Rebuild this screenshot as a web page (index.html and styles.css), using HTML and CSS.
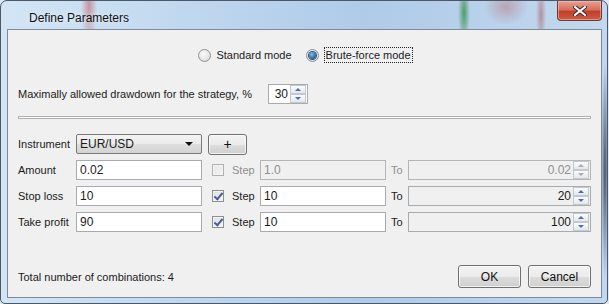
FILE: index.html
```html
<!DOCTYPE html>
<html lang="en">

<head>
    <meta charset="UTF-8">
    <title>Define Parameters</title>
    <link rel="stylesheet" href="styles.css">
</head>

<body>
    <div class="window">
        <div class="titlebar">
            <span class="title">Define Parameters</span>
            <span class="close">
                <svg width="14" height="10" viewBox="0 0 14 10">
                    <path d="M2 1 L12 9 M12 1 L2 9" stroke="#3a2a2a" stroke-width="4" stroke-linecap="square" />
                    <path d="M2 1 L12 9 M12 1 L2 9" stroke="#ffffff" stroke-width="2" stroke-linecap="square" />
                </svg>
            </span>
        </div>

        <div class="client">
            <div class="modes">
                <label class="radio"><span class="radio-dot"></span>Standard mode</label>
                <label class="radio"><span class="radio-dot on"></span><span class="focus">Brute-force mode</span></label>
            </div>

            <div class="drawdown">
                <span class="drawdown-label">Maximally allowed drawdown for the strategy, %</span>
                <div class="spinner spinner-small">
                    <span class="spin-value">30</span>
                    <span class="spin-btns"><span class="spin-up"></span><span class="spin-down"></span></span>
                </div>
            </div>

            <div class="separator"></div>

            <div class="params">
                <span class="label row-label">Instrument</span>
                <div class="combo"><span>EUR/USD</span><span class="combo-arrow"></span></div>
                <button class="btn btn-plus">+</button>

                <span class="label row-label">Amount</span>
                <div class="field">0.02</div>
                <span class="check check-disabled"></span>
                <span class="label disabled">Step</span>
                <div class="field field-disabled">1.0</div>
                <span class="label label-to disabled">To</span>
                <div class="spinner spinner-wide disabled">
                    <span class="spin-value">0.02</span>
                    <span class="spin-btns"><span class="spin-up"></span><span class="spin-down"></span></span>
                </div>

                <span class="label row-label">Stop loss</span>
                <div class="field">10</div>
                <span class="check checked"></span>
                <span class="label">Step</span>
                <div class="field">10</div>
                <span class="label label-to">To</span>
                <div class="spinner spinner-wide">
                    <span class="spin-value">20</span>
                    <span class="spin-btns"><span class="spin-up"></span><span class="spin-down"></span></span>
                </div>

                <span class="label row-label">Take profit</span>
                <div class="field">90</div>
                <span class="check checked"></span>
                <span class="label">Step</span>
                <div class="field">10</div>
                <span class="label label-to">To</span>
                <div class="spinner spinner-wide">
                    <span class="spin-value">100</span>
                    <span class="spin-btns"><span class="spin-up"></span><span class="spin-down"></span></span>
                </div>
            </div>

            <div class="footer">
                <span class="total">Total number of combinations: 4</span>
                <button class="btn btn-dialog">OK</button>
                <button class="btn btn-dialog">Cancel</button>
            </div>
        </div>
    </div>
</body>

</html>
```

FILE: styles.css
```css
:root {
    --text-color: #1b1b1b;
    --disabled-color: #8f8f8f;
    --field-border: #a7abb0;
    --panel-color: #f0f0f0;
}

* {
    margin: 0;
    padding: 0;
    box-sizing: border-box;
}

body {
    width: 609px;
    height: 304px;
    overflow: hidden;
    background-color: #dfe9f3;
    font-family: "Liberation Sans", Arial, sans-serif;
    font-size: 11px;
    color: var(--text-color);
}

.window {
    width: 608px;
    height: 304px;
    border: 1px solid #4a5868;
    border-radius: 7px 7px 5px 5px;
    display: flex;
    flex-direction: column;
    background:
        radial-gradient(ellipse 8px 40px at 88px 5px, rgba(190, 60, 60, 0.45), transparent),
        radial-gradient(ellipse 6px 30px at 463px 12px, rgba(40, 140, 60, 0.75), transparent),
        radial-gradient(ellipse 22px 18px at 505px 6px, rgba(180, 80, 80, 0.35), transparent),
        radial-gradient(ellipse 5px 30px at 540px 14px, rgba(170, 60, 60, 0.45), transparent),
        radial-gradient(ellipse 4px 110px at 604px 170px, rgba(40, 50, 70, 0.8), transparent),
        linear-gradient(90deg, #d3e5f5 0%, #bdd6ee 35%, #afcbe8 60%, #c3d8ee 100%);
}

.titlebar {
    height: 28px;
    display: flex;
    align-items: flex-start;
    padding-left: 28px;
}

.title {
    font-size: 12px;
    color: #111;
    margin-top: 10px;
    text-shadow: 0 0 6px rgba(255, 255, 255, 0.9);
}

.close {
    margin-left: auto;
    margin-right: 5px;
    width: 45px;
    height: 20px;
    border: 1px solid #6b3b34;
    border-top: none;
    border-radius: 0 0 4px 4px;
    background: linear-gradient(#e6a393 0%, #d8705c 45%, #c2402b 55%, #cf5a42 100%);
    box-shadow: inset 0 0 0 1px rgba(255, 200, 190, 0.5);
    display: flex;
    align-items: center;
    justify-content: center;
}

.client {
    flex: 1;
    margin: 0 5px 5px 6px;
    border: 1px solid #7d8a99;
    background-color: var(--panel-color);
    display: flex;
    flex-direction: column;
    padding: 0 10px 9px 10px;
}

.modes {
    display: flex;
    justify-content: center;
    gap: 14px;
    margin-top: 17px;
    padding-left: 2px;
}

.radio {
    display: flex;
    align-items: center;
    gap: 5px;
    height: 16px;
}

.radio-dot {
    width: 13px;
    height: 13px;
    border-radius: 50%;
    border: 1px solid #8c8e90;
    background: radial-gradient(circle at 40% 35%, #fafafa, #d6d6d6);
    display: flex;
    align-items: center;
    justify-content: center;
}

.radio-dot.on::after {
    content: "";
    width: 7px;
    height: 7px;
    border-radius: 50%;
    background: radial-gradient(circle at 40% 35%, #7cc2ee, #1d5f96 70%);
    box-shadow: 0 0 0 1px #29527e;
}

.focus {
    border: 1px dotted #222;
    padding: 0 1px;
    line-height: 14px;
}

.drawdown {
    display: flex;
    align-items: center;
    margin-top: 21px;
}

.drawdown-label {
    width: 250px;
}

.spinner {
    display: flex;
    align-items: center;
    border: 1px solid var(--field-border);
    background-color: #fff;
    height: 20px;
}

.spinner-small {
    width: 40px;
}

.spinner-wide {
    height: 20px;
    background-color: #f0f0f0;
}

.spin-value {
    flex: 1;
    text-align: right;
    padding-right: 2px;
    font-size: 12px;
}

.spin-btns {
    width: 16px;
    height: 18px;
    display: flex;
    flex-direction: column;
    margin-right: 1px;
}

.spin-up,
.spin-down {
    flex: 1;
    border: 1px solid #c3c8ce;
    background: linear-gradient(#fbfbfb, #e4e7eb);
    display: flex;
    align-items: center;
    justify-content: center;
}

.spin-up::after {
    content: "";
    border-left: 3px solid transparent;
    border-right: 3px solid transparent;
    border-bottom: 3px solid #4e6ea6;
}

.spin-down::after {
    content: "";
    border-left: 3px solid transparent;
    border-right: 3px solid transparent;
    border-top: 3px solid #4e6ea6;
}

.disabled .spin-up::after {
    border-bottom-color: #a6acb6;
}

.disabled .spin-down::after {
    border-top-color: #a6acb6;
}

.spinner.disabled {
    color: var(--disabled-color);
    border-color: #b5b5b5;
}

.separator {
    margin-top: 12px;
    height: 3px;
    border: 1px solid #b0b0b0;
    background-color: #fff;
}

.params {
    margin-top: 15px;
    display: grid;
    grid-template-columns: 58px 126px 30px 28px 126px 22px 183px;
    grid-auto-rows: 20px;
    row-gap: 6px;
    align-items: center;
}

.label {
    white-space: nowrap;
}

.row-label {
    grid-column: 1;
}

.label-to {
    padding-left: 5px;
}

.label.disabled {
    color: var(--disabled-color);
}

.field {
    height: 20px;
    border: 1px solid var(--field-border);
    background-color: #fff;
    padding: 0 3px;
    line-height: 18px;
    font-size: 12px;
}

.field-disabled {
    background-color: #f0f0f0;
    border-color: #b5b5b5;
    color: var(--disabled-color);
}

.combo {
    height: 20px;
    border: 1px solid #7a7a7a;
    border-radius: 2px;
    background: linear-gradient(#f3f3f3 0%, #ebebeb 50%, #dedede 51%, #d4d4d4 100%);
    display: flex;
    align-items: center;
    justify-content: space-between;
    padding: 0 8px 0 3px;
    font-size: 12px;
}

.combo-arrow {
    border-left: 4px solid transparent;
    border-right: 4px solid transparent;
    border-top: 4px solid #111;
}

.btn {
    font-family: inherit;
    font-size: 12px;
    color: #111;
    border: 1px solid #707070;
    border-radius: 3px;
    background: linear-gradient(#f3f3f3 0%, #ebebeb 50%, #dddddd 51%, #cfcfcf 100%);
    box-shadow: inset 0 0 0 1px rgba(255, 255, 255, 0.7);
}

.btn-plus {
    grid-column: 3 / 5;
    width: 39px;
    height: 21px;
    margin-left: 6px;
    font-size: 14px;
}

.check {
    width: 12px;
    height: 12px;
    margin-left: 10px;
    border: 1px solid #8e8f8f;
    background: linear-gradient(135deg, #dcdcdc, #f8f8f8);
    box-shadow: inset 0 0 0 1px #f4f4f4;
    position: relative;
}

.check-disabled {
    border-color: #b1b1b1;
    background: linear-gradient(135deg, #e6e6e6, #f4f4f4);
}

.check.checked {
    background: linear-gradient(135deg, #d9dde4, #f6f7f9);
}

.check.checked::after {
    content: "";
    position: absolute;
    left: 3px;
    top: 0px;
    width: 3px;
    height: 7px;
    border-right: 2px solid #4a5f97;
    border-bottom: 2px solid #4a5f97;
    transform: rotate(40deg);
}

.footer {
    margin-top: auto;
    display: flex;
    align-items: center;
}

.total {
    flex: 1;
}

.btn-dialog {
    width: 63px;
    height: 23px;
    margin-left: 7px;
}
```
